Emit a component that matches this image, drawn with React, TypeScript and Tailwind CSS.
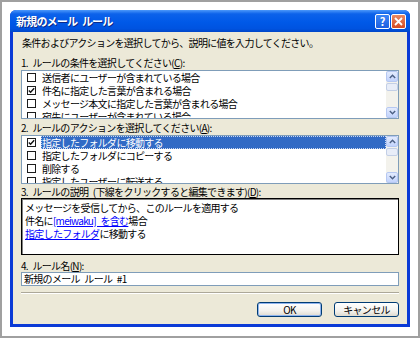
import React from 'react'

const conditions = [
  { label: '送信者にユーザーが含まれている場合', checked: false },
  { label: '件名に指定した言葉が含まれる場合', checked: true },
  { label: 'メッセージ本文に指定した言葉が含まれる場合', checked: false },
  { label: '宛先にユーザーが含まれている場合', checked: false },
]

const actions = [
  { label: '指定したフォルダに移動する', checked: true },
  { label: '指定したフォルダにコピーする', checked: false },
  { label: '削除する', checked: false },
  { label: '指定したユーザーに転送する', checked: false },
]

function CheckBox({ checked }: { checked: boolean }) {
  return (
    <div className="w-[9px] h-[9px] border border-[#1c1c1c] bg-white shrink-0 flex items-center justify-center">
      {checked && (
        <svg width="7" height="7" viewBox="0 0 7 7">
          <path d="M0.8 3.4 L2.6 5.3 L6.2 1.2" fill="none" stroke="#111" strokeWidth="1.4" />
        </svg>
      )}
    </div>
  )
}

function ScrollBar() {
  return (
    <div className="w-[12px] flex flex-col bg-[#f3f2ec] shrink-0">
      <div className="h-[11px] rounded-[2px] border border-[#b6c8f2] bg-[linear-gradient(to_bottom,#e3ebfd,#c2d3fc)] flex items-center justify-center">
        <svg width="7" height="5" viewBox="0 0 7 5">
          <path d="M0.8 4 L3.5 1.2 L6.2 4" fill="none" stroke="#4d6185" strokeWidth="1.4" />
        </svg>
      </div>
      <div className="h-[8px] mt-[1px] rounded-[2px] border border-[#c3cfe6] bg-[#e8edf8]" />
      <div className="flex-1" />
      <div className="h-[11px] rounded-[2px] border border-[#b6c8f2] bg-[linear-gradient(to_bottom,#e3ebfd,#c2d3fc)] flex items-center justify-center">
        <svg width="7" height="5" viewBox="0 0 7 5">
          <path d="M0.8 1 L3.5 3.8 L6.2 1" fill="none" stroke="#4d6185" strokeWidth="1.4" />
        </svg>
      </div>
    </div>
  )
}

function CheckList({ items, selected }: { items: { label: string; checked: boolean }[]; selected?: number }) {
  return (
    <div className="h-[49px] border border-[#7f9db9] bg-white flex overflow-hidden">
      <div className="flex-1 overflow-hidden">
        {items.map((it, i) => (
          <div key={i} className="h-[13px] flex items-center pl-[5px]">
            <CheckBox checked={it.checked} />
            <div
              className={
                'ml-[5px] flex-1 h-full flex items-center pl-[1px] whitespace-nowrap ' +
                (i === selected ? 'bg-[#316ac5] text-white outline outline-1 outline-dotted outline-[#c9d7f0] -outline-offset-1' : '')
              }
            >
              {it.label}
            </div>
          </div>
        ))}
      </div>
      <ScrollBar />
    </div>
  )
}

function XpButton({ children, isDefault }: { children: React.ReactNode; isDefault?: boolean }) {
  return (
    <button
      className={
        'w-[65px] h-[15px] rounded-[3px] border border-[#003c74] bg-[linear-gradient(to_bottom,#ffffff,#f3f2ee_60%,#dedbd0)] flex items-center justify-center leading-none ' +
        (isDefault ? 'shadow-[inset_0_0_0_1px_#8fb4ee]' : '')
      }
    >
      {children}
    </button>
  )
}

export default function App() {
  return (
    <div className="w-[420px] h-[338px] bg-[#a0a0a0] p-[2px] font-['Noto_Sans_CJK_JP','Noto_Sans',sans-serif] text-[10px] text-black [word-spacing:3px]">
      <div className="h-full bg-white pl-[8px] pt-[8px]">
        <div className="w-[400px] h-[317px] flex flex-col rounded-t-[6px] bg-[#0a3ad6] overflow-hidden">
          {/* タイトルバー */}
          <div className="h-[22px] shrink-0 flex items-center pl-[6px] pr-[4px] bg-[linear-gradient(to_bottom,#4c98fa_0%,#0c62ea_18%,#0059e8_55%,#0053e0_85%,#0046c8_100%)]">
            <span className="text-white font-bold text-[11px] tracking-[-0.8px] [text-shadow:1px_1px_0_#0a2a8a]">新規のメール ルール</span>
            <div className="ml-auto flex gap-[1px]">
              <div className="w-[15px] h-[15px] rounded-[2px] border border-white bg-[linear-gradient(to_bottom,#3c86f5,#1d5fe0)] flex items-center justify-center text-white font-bold text-[11px] leading-none">
                ?
              </div>
              <div className="w-[15px] h-[15px] rounded-[2px] border border-white bg-[linear-gradient(to_bottom,#e98a64,#d54b22)] flex items-center justify-center">
                <svg width="9" height="9" viewBox="0 0 9 9">
                  <path d="M1 1 L8 8 M8 1 L1 8" stroke="#fff" strokeWidth="1.8" />
                </svg>
              </div>
            </div>
          </div>

          {/* 本体 */}
          <div className="flex-1 mx-[3px] mb-[3px] bg-[#ece9d8] px-[8px] flex flex-col tracking-[-0.7px] leading-[12px]">
            <div className="mt-[5px] pl-[1px]">条件およびアクションを選択してから、説明に値を入力してください。</div>

            <div className="mt-[8px]">
              1. ルールの条件を選択してください(<span className="underline">C</span>):
            </div>
            <div className="mt-[1px]">
              <CheckList items={conditions} />
            </div>

            <div className="mt-[3px]">
              2. ルールのアクションを選択してください(<span className="underline">A</span>):
            </div>
            <div className="mt-[1px]">
              <CheckList items={actions} selected={0} />
            </div>

            <div className="mt-[2px]">
              3. ルールの説明 (下線をクリックすると編集できます)(<span className="underline">D</span>):
            </div>
            <div className="h-[57px] border border-black shadow-[inset_1px_1px_0_#808080] bg-white px-[3px] pt-[2px] leading-[13px]">
              <div>メッセージを受信してから、このルールを適用する</div>
              <div>
                件名に<span className="text-[#0000ff] underline">[meiwaku] を含む</span>場合
              </div>
              <div>
                <span className="text-[#0000ff] underline">指定したフォルダ</span>に移動する
              </div>
            </div>

            <div className="mt-[5px]">
              4. ルール名(<span className="underline">N</span>):
            </div>
            <div className="h-[14px] border border-[#7f9db9] bg-white px-[2px] flex items-center whitespace-pre">新規のメール ルール #1</div>

            <div className="mt-[6px] border-t border-[#aca899] border-b border-b-white" />

            <div className="mt-[8px] flex justify-end gap-[12px]">
              <XpButton isDefault>OK</XpButton>
              <XpButton>キャンセル</XpButton>
            </div>
          </div>
        </div>
      </div>
    </div>
  )
}
